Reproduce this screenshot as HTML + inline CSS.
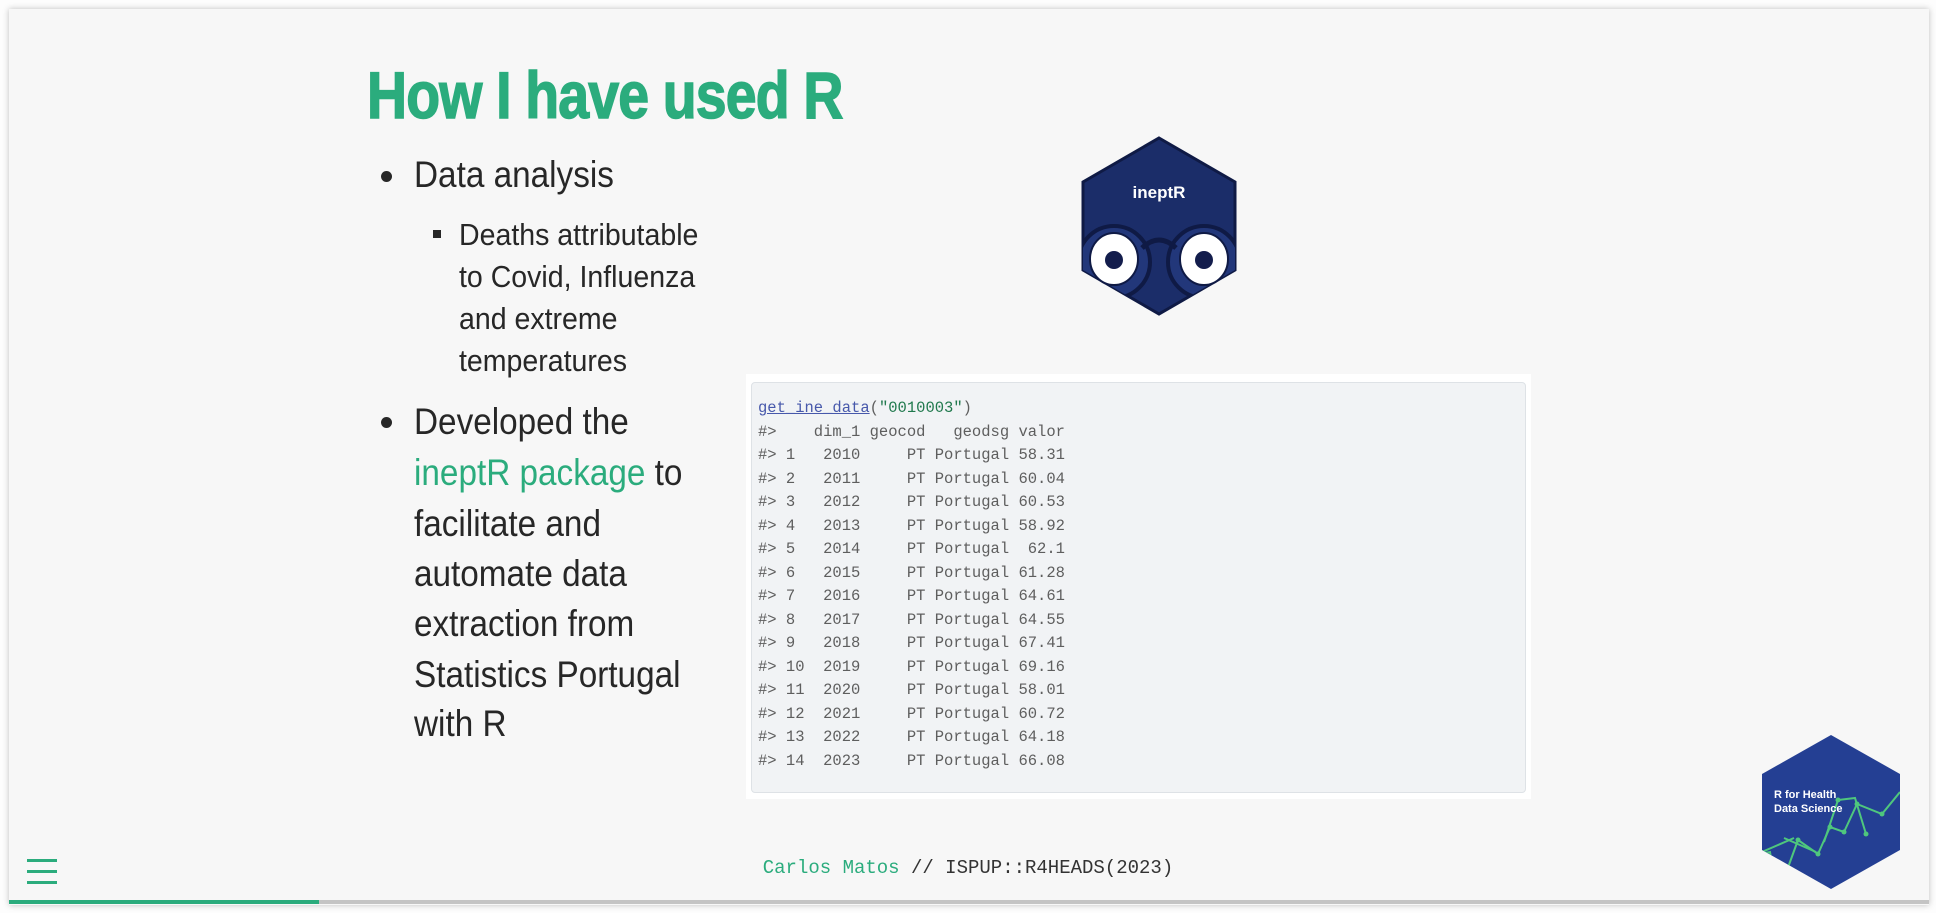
<!DOCTYPE html>
<html><head><meta charset="utf-8"><style>
html,body{margin:0;padding:0;width:1936px;height:913px;overflow:hidden;background:#fdfdfd;}
.slide{position:absolute;left:9px;top:9px;width:1920px;height:896px;background:#f7f7f7;box-shadow:0 0 6px rgba(0,0,0,0.25);}
.t{position:absolute;white-space:nowrap;font-family:"Liberation Sans",sans-serif;color:#272727;transform-origin:0 0;}
.title{left:367px;top:57px;font-size:66px;font-weight:bold;color:#2bac7d;transform:scaleX(0.84);letter-spacing:-1px;-webkit-text-stroke:1.5px #2bac7d;}
.b{font-size:37px;transform:scaleX(0.9);}
.s{font-size:31px;transform:scaleX(0.92);}
.dot{position:absolute;width:11px;height:11px;border-radius:50%;background:#272727;}
.sq{position:absolute;width:8px;height:8px;background:#272727;}
.codeouter{position:absolute;left:746px;top:374px;width:785px;height:425px;background:#fff;}
.code{position:absolute;left:751px;top:382px;width:775px;height:411px;background:#f1f3f5;border:1px solid #dee2e6;border-radius:4px;box-sizing:border-box;}
pre{position:absolute;left:758px;top:397px;margin:0;font-family:"Liberation Mono",monospace;font-size:15.5px;line-height:23.5px;color:#5e5e5e;}
.fn{color:#4758ab;text-decoration:underline;}
.str{color:#20794d;}
.foot{position:absolute;left:0;width:1936px;top:857px;text-align:center;font-family:"Liberation Mono",monospace;font-size:19px;color:#333;}
</style></head><body>
<div class="slide"></div>
<div class="t title">How I have used R</div>

<div class="dot" style="left:381px;top:171px"></div>
<div class="t b" style="left:414px;top:154px">Data analysis</div>
<div class="sq" style="left:433px;top:230px"></div>
<div class="t s" style="left:459px;top:217px">Deaths attributable</div>
<div class="t s" style="left:459px;top:259px">to Covid, Influenza</div>
<div class="t s" style="left:459px;top:301px">and extreme</div>
<div class="t s" style="left:459px;top:343px">temperatures</div>

<div class="dot" style="left:381px;top:417px"></div>
<div class="t b" style="left:414px;top:401px">Developed the</div>
<div class="t b" style="left:414px;top:452px"><span style="color:#2bac7d">ineptR package</span> to</div>
<div class="t b" style="left:414px;top:503px">facilitate and</div>
<div class="t b" style="left:414px;top:553px">automate data</div>
<div class="t b" style="left:414px;top:603px">extraction from</div>
<div class="t b" style="left:414px;top:654px">Statistics Portugal</div>
<div class="t b" style="left:414px;top:703px">with R</div>

<svg style="position:absolute;left:1080px;top:136px" width="158" height="180" viewBox="0 0 158 180">
<defs><clipPath id="h1"><polygon points="79,2 155,46 155,134 79,178 3,134 3,46"/></clipPath></defs>
<polygon points="79,2 155,46 155,134 79,178 3,134 3,46" fill="#1b2d69" stroke="#0f1a45" stroke-width="3"/>
<g clip-path="url(#h1)">
<circle cx="34" cy="126" r="36" fill="#22377a" stroke="#0f1a45" stroke-width="4"/>
<circle cx="124" cy="126" r="36" fill="#22377a" stroke="#0f1a45" stroke-width="4"/>
<path d="M62 112 Q79 96 96 112" fill="none" stroke="#0f1a45" stroke-width="5"/>
</g>
<ellipse cx="34" cy="123" rx="24" ry="26" fill="#fff" stroke="#0f1a45" stroke-width="2"/>
<ellipse cx="124" cy="123" rx="24" ry="26" fill="#fff" stroke="#0f1a45" stroke-width="2"/>
<circle cx="34" cy="124" r="9" fill="#131d4c"/>
<circle cx="124" cy="124" r="9" fill="#131d4c"/>
<text x="79" y="62" text-anchor="middle" font-family="Liberation Sans,sans-serif" font-weight="bold" font-size="17" fill="#fff">ineptR</text>
</svg>

<div class="codeouter"></div>
<div class="code"></div>
<pre><span class="fn">get_ine_data</span>(<span class="str">"0010003"</span>)
#&gt;    dim_1 geocod   geodsg valor
#&gt; 1   2010     PT Portugal 58.31
#&gt; 2   2011     PT Portugal 60.04
#&gt; 3   2012     PT Portugal 60.53
#&gt; 4   2013     PT Portugal 58.92
#&gt; 5   2014     PT Portugal  62.1
#&gt; 6   2015     PT Portugal 61.28
#&gt; 7   2016     PT Portugal 64.61
#&gt; 8   2017     PT Portugal 64.55
#&gt; 9   2018     PT Portugal 67.41
#&gt; 10  2019     PT Portugal 69.16
#&gt; 11  2020     PT Portugal 58.01
#&gt; 12  2021     PT Portugal 60.72
#&gt; 13  2022     PT Portugal 64.18
#&gt; 14  2023     PT Portugal 66.08</pre>

<svg style="position:absolute;left:1760px;top:734px" width="142" height="156" viewBox="0 0 142 156">
<defs><clipPath id="h2"><polygon points="71,1 140,40 140,116 71,155 2,116 2,40"/></clipPath></defs>
<polygon points="71,1 140,40 140,116 71,155 2,116 2,40" fill="#243f93"/>
<g clip-path="url(#h2)" fill="none" stroke="#4fc77d" stroke-width="2">
<polyline points="0,120 10,118 16,153"/>
<polyline points="0,128 0,120"/>
<polyline points="22,150 38,106 58,120 70,93 84,98 97,70 122,80 140,58"/>
<polyline points="2,118 34,104"/>
<polyline points="24,104 56,118"/>
<polyline points="64,108 78,66 95,64 106,100"/>
</g>
<g fill="#4fc77d"><circle cx="38" cy="106" r="2.5"/><circle cx="58" cy="120" r="2.5"/><circle cx="70" cy="93" r="2.5"/><circle cx="84" cy="98" r="2.5"/><circle cx="97" cy="70" r="2.5"/><circle cx="122" cy="80" r="2.5"/><circle cx="78" cy="66" r="2.5"/><circle cx="106" cy="100" r="2.5"/></g>
<text x="14" y="64" font-family="Liberation Sans,sans-serif" font-weight="bold" font-size="11" fill="#fff">R for Health</text>
<text x="14" y="78" font-family="Liberation Sans,sans-serif" font-weight="bold" font-size="11" fill="#fff">Data Science</text>
</svg>

<div style="position:absolute;left:27px;top:859px;width:30px;height:3px;background:#2bac7d"></div>
<div style="position:absolute;left:27px;top:870px;width:30px;height:3px;background:#2bac7d"></div>
<div style="position:absolute;left:27px;top:881px;width:30px;height:3px;background:#2bac7d"></div>

<div class="foot"><span style="color:#2bac7d">Carlos Matos</span> // ISPUP::R4HEADS(2023)</div>

<div style="position:absolute;left:9px;top:900px;width:1920px;height:4px;background:#c4c4c4"></div>
<div style="position:absolute;left:9px;top:900px;width:310px;height:4px;background:#2bac7d"></div>
</body></html>
